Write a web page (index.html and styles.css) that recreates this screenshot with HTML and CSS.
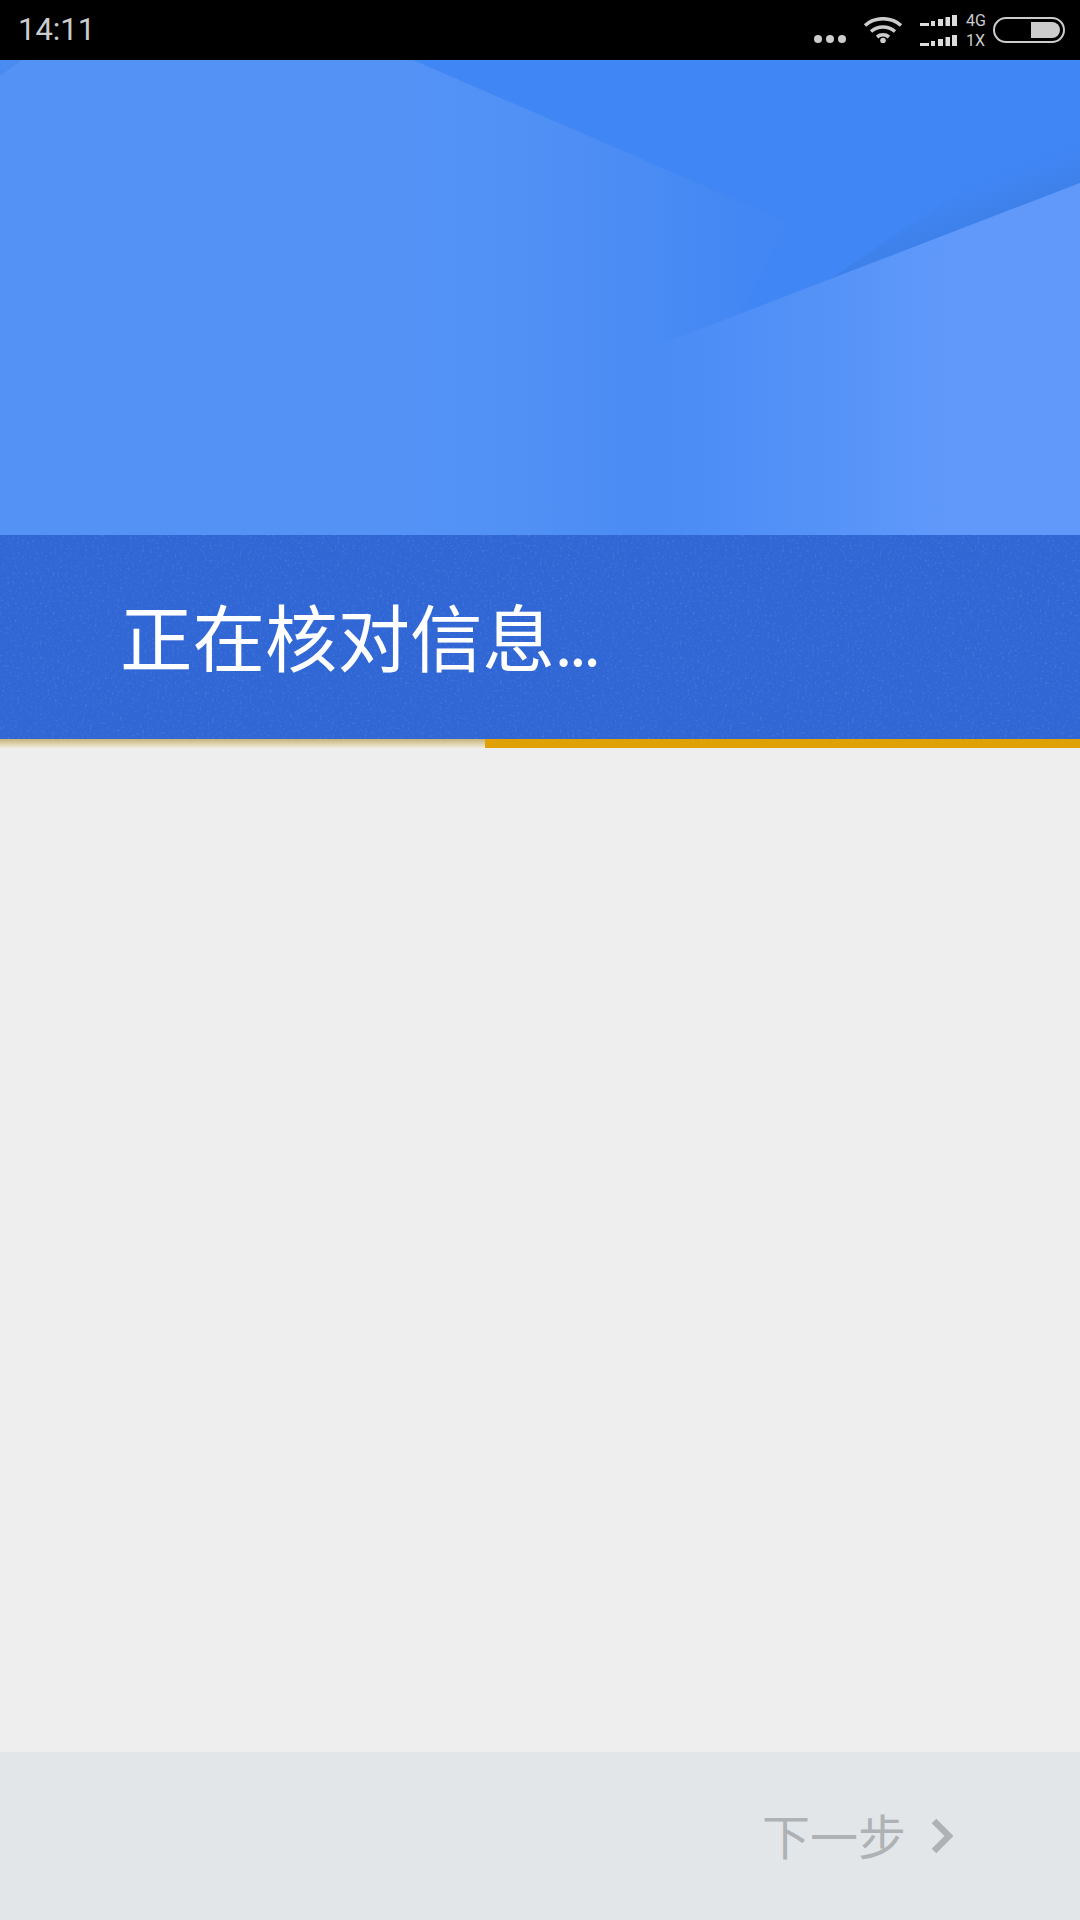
FILE: index.html
```html
<!DOCTYPE html>
<html lang="zh-CN">
<head>
  <meta charset="UTF-8" />
  <meta name="viewport" content="width=device-width, initial-scale=1.0"/>
  <title>正在核对信息</title>
  <link rel="stylesheet" href="styles.css">
</head>
<body>
  <div class="page">
    <div class="statusbar">
      <span class="time">14:11</span>
      <div class="status-icons">
        <div class="dots"><i></i><i></i><i></i></div>
        <svg class="wifi" viewBox="0 0 40 26">
          <path d="M2 8.5C12 -0.5 28 -0.5 38 8.5" />
          <path d="M8 14.5C15 8.5 25 8.5 32 14.5" />
          <path d="M14 20C17.5 17.2 22.5 17.2 26 20" />
          <circle cx="20" cy="23.5" r="2.8" />
        </svg>
        <div class="signal">
          <div class="signal-row">
            <svg class="bars" viewBox="0 0 37 11">
              <rect x="0" y="8" width="9" height="3" /><rect x="11" y="6" width="4" height="5" /><rect x="18" y="4" width="5" height="7" /><rect x="25.5" y="2" width="4.5" height="9" /><rect x="32" y="0" width="5" height="11" />
            </svg>
            <span>4G</span>
          </div>
          <div class="signal-row">
            <svg class="bars" viewBox="0 0 37 11">
              <rect x="0" y="8" width="9" height="3" /><rect x="11" y="6" width="4" height="5" /><rect x="18" y="4" width="5" height="7" /><rect x="25.5" y="2" width="4.5" height="9" /><rect x="32" y="0" width="5" height="11" />
            </svg>
            <span>1X</span>
          </div>
        </div>
        <div class="battery"><div class="battery-level"></div></div>
      </div>
    </div>

    <svg class="hero" viewBox="0 0 1080 475" preserveAspectRatio="none">
      <defs>
        <linearGradient id="heroBase" gradientUnits="userSpaceOnUse" x1="0" y1="0" x2="1080" y2="0">
          <stop offset="0" stop-color="#5592f6" />
          <stop offset="0.36" stop-color="#5492f6" />
          <stop offset="0.5" stop-color="#5090f5" />
          <stop offset="0.6" stop-color="#4a8bf4" />
          <stop offset="0.7" stop-color="#4287f4" />
          <stop offset="1" stop-color="#4086f5" />
        </linearGradient>
        <linearGradient id="heroLight" gradientUnits="userSpaceOnUse" x1="640" y1="0" x2="950" y2="0">
          <stop offset="0" stop-color="#6099fa" stop-opacity="0" />
          <stop offset="0.35" stop-color="#6099fa" stop-opacity="0.45" />
          <stop offset="1" stop-color="#6099fa" />
        </linearGradient>
        <linearGradient id="heroShade" gradientUnits="userSpaceOnUse" x1="850" y1="211" x2="836" y2="174">
          <stop offset="0" stop-color="#3a70c8" stop-opacity="0.25" />
          <stop offset="1" stop-color="#3a70c8" stop-opacity="0" />
        </linearGradient>
      </defs>
      <rect width="1080" height="475" fill="url(#heroBase)" />
      <polygon points="0,0 22,0 0,16" fill="#4a8bf1" />
      <polygon points="413,0 1080,0 1080,123 740,254 790,163" fill="#4086f5" />
      <polygon points="1080,50 1080,123 830,219" fill="url(#heroShade)" />
      <polygon points="1080,123 620,300 640,475 1080,475" fill="url(#heroLight)" />
    </svg>

    <div class="band">
      <svg class="noise">
        <filter id="grain">
          <feTurbulence type="fractalNoise" baseFrequency="0.4" numOctaves="2" seed="4" />
          <feColorMatrix values="0 0 0 0 0.55  0 0 0 0 0.7  0 0 0 0 1  0 0 0 3 -1.7" />
        </filter>
        <rect width="100%" height="100%" filter="url(#grain)" />
      </svg>
      <h1 class="title">正在核对信息<span class="ellipsis">...</span></h1>
    </div>

    <div class="progress">
      <div class="progress-done"></div>
      <div class="progress-rest"></div>
    </div>

    <div class="content"></div>

    <div class="footer">
      <span class="next-label">下一步</span>
      <svg class="next-arrow" viewBox="0 0 22 36">
        <path d="M3 3L18 18L3 33" />
      </svg>
    </div>
  </div>
</body>
</html>
```

FILE: styles.css
```css
* { margin:0; padding:0; box-sizing:border-box; }
body {
  width:1080px;
  height:1920px;
  overflow:hidden;
  background:#eeeeee;
  font-family:"Noto Sans CJK SC",sans-serif;
}
.page {
  display:flex;
  flex-direction:column;
  height:1920px;
}
.statusbar {
  height:60px;
  flex:none;
  background:#000;
  color:#ccc;
  display:flex;
  justify-content:space-between;
  align-items:center;
  padding:0 15px 0 18px;
}
.time {
  font-family:Roboto,sans-serif;
  font-size:31px;
  font-weight:400;
  line-height:60px;
}
.status-icons {
  display:flex;
  align-items:center;
  height:60px;
}
.dots {
  display:flex;
  gap:4px;
  margin:18px 17px 0 0;
}
.dots i {
  width:8px;
  height:8px;
  border-radius:50%;
  background:#ccc;
}
.wifi {
  width:40px;
  height:26px;
  margin-right:17px;
}
.wifi path {
  fill:none;
  stroke:#ccc;
  stroke-width:3.6;
}
.wifi circle { fill:#ccc; }
.signal {
  display:flex;
  flex-direction:column;
  gap:9px;
  margin-right:6px;
}
.signal-row {
  display:flex;
  align-items:center;
  gap:9px;
  height:11px;
  font-family:Roboto,sans-serif;
  font-size:16px;
  font-weight:400;
  line-height:11px;
}
.bars {
  width:37px;
  height:11px;
  fill:#ddd;
}
.signal-row span { width:21px; }
.battery {
  width:72px;
  height:26px;
  border:2px solid #ccc;
  border-radius:13px;
  padding:3px;
  display:flex;
  justify-content:flex-end;
}
.battery-level {
  width:29px;
  height:16px;
  background:#ccc;
  border-radius:0 8px 8px 0;
}
.hero {
  display:block;
  width:1080px;
  height:475px;
  flex:none;
}
.band {
  position:relative;
  height:204px;
  flex:none;
  background:#3067d5;
  display:flex;
  align-items:center;
  padding:0 0 0 120px;
}
.noise {
  position:absolute;
  left:0;
  top:0;
  width:100%;
  height:100%;
  opacity:0.16;
}
.title {
  position:relative;
  color:#fff;
  font-size:72.5px;
  font-weight:400;
  line-height:90px;
}
.ellipsis {
  font-size:62px;
  letter-spacing:-3px;
}
.progress {
  height:9px;
  flex:none;
  display:flex;
}
.progress-done {
  width:485px;
  background:linear-gradient(#c7b37a,#dfd6b4 60%,#eeeade);
}
.progress-rest {
  flex:1;
  background:#dfa105;
}
.content {
  flex:1;
  background:#eeeeee;
}
.footer {
  height:168px;
  flex:none;
  background:#e2e6e9;
  display:flex;
  justify-content:flex-end;
  align-items:center;
  gap:25px;
  padding:0 127px 4px 0;
}
.next-label {
  color:#aeb2b5;
  font-size:48px;
  line-height:60px;
}
.next-arrow {
  width:22px;
  height:36px;
  margin-top:4px;
}
.next-arrow path {
  fill:none;
  stroke:#aeb2b5;
  stroke-width:6.5;
}
```
